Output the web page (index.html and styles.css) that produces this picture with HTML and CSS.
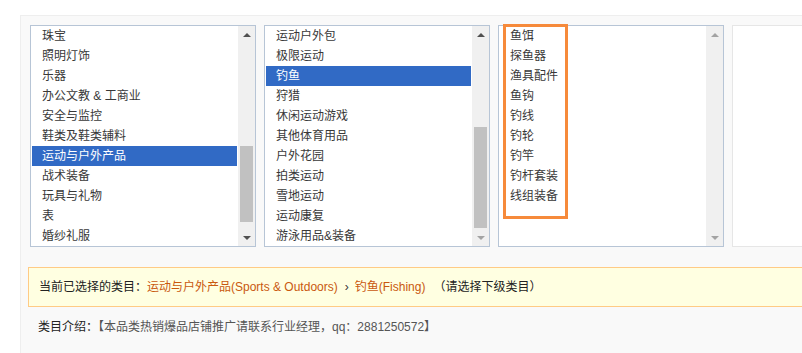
FILE: index.html
```html
<!DOCTYPE html>
<html lang="zh-CN">
<head>
    <meta charset="utf-8">
    <link rel="stylesheet" href="styles.css">
</head>
<body>
    <div class="panel">
        <div class="lists">
            <div class="catList">
                <ul class="items">
                    <li>珠宝</li>
                    <li>照明灯饰</li>
                    <li>乐器</li>
                    <li>办公文教 &amp; 工商业</li>
                    <li>安全与监控</li>
                    <li>鞋类及鞋类辅料</li>
                    <li class="selected">运动与户外产品</li>
                    <li>战术装备</li>
                    <li>玩具与礼物</li>
                    <li>表</li>
                    <li>婚纱礼服</li>
                </ul>
                <div class="scrollbar">
                    <div class="arrowBox"><span class="arrowUp"></span></div>
                    <div class="track"><div class="thumb thumbOne"></div></div>
                    <div class="arrowBox"><span class="arrowDown"></span></div>
                </div>
            </div>

            <div class="catList">
                <ul class="items">
                    <li>运动户外包</li>
                    <li>极限运动</li>
                    <li class="selected">钓鱼</li>
                    <li>狩猎</li>
                    <li>休闲运动游戏</li>
                    <li>其他体育用品</li>
                    <li>户外花园</li>
                    <li>拍类运动</li>
                    <li>雪地运动</li>
                    <li>运动康复</li>
                    <li>游泳用品&amp;装备</li>
                </ul>
                <div class="scrollbar">
                    <div class="arrowBox"><span class="arrowUp"></span></div>
                    <div class="track"><div class="thumb thumbTwo"></div></div>
                    <div class="arrowBox"><span class="arrowDown disabled"></span></div>
                </div>
            </div>

            <div class="catList">
                <div class="markBox"></div>
                <ul class="items">
                    <li>鱼饵</li>
                    <li>探鱼器</li>
                    <li>渔具配件</li>
                    <li>鱼钩</li>
                    <li>钓线</li>
                    <li>钓轮</li>
                    <li>钓竿</li>
                    <li>钓杆套装</li>
                    <li>线组装备</li>
                </ul>
                <div class="scrollbar">
                    <div class="arrowBox"><span class="arrowUp disabled"></span></div>
                    <div class="track"></div>
                    <div class="arrowBox"><span class="arrowDown disabled"></span></div>
                </div>
            </div>

            <div class="catList emptyList"></div>
        </div>

        <div class="chosen">
            当前已选择的类目：<span class="path">运动与户外产品(Sports &amp; Outdoors)</span><span class="sep">›</span><span class="path">钓鱼(Fishing)</span><span class="hint">（请选择下级类目）</span>
        </div>

        <div class="intro">
            类目介绍：<span class="introText">【本品类热销爆品店铺推广请联系行业经理，qq：2881250572】</span>
        </div>
    </div>
</body>
</html>
```

FILE: styles.css
```css
body {
    margin: 0;
    overflow: hidden;
    background-color: #ffffff;
    font-family: "Liberation Sans", "Noto Sans CJK SC", sans-serif;
    font-size: 12px;
    color: #333333;
}

.panel {
    margin: 15px 0 0 20px;
    height: calc(100vh - 15px);
    box-sizing: border-box;
    overflow: hidden;
    padding: 9px 0 0 8px;
    border-top: 1px solid #eeeeee;
    border-left: 1px solid #eeeeee;
    background-color: #f9f9f9;
}

.lists {
    display: flex;
    gap: 8px;
    padding-left: 1px;
}

.catList {
    position: relative;
    display: flex;
    flex-shrink: 0;
    width: 226px;
    height: 222px;
    box-sizing: border-box;
    border: 1px solid #b7c5d6;
    background-color: #ffffff;
}

.emptyList {
    border-color: #e6e6e6;
}

.items {
    flex: 1;
    margin: 0;
    padding: 0 1px;
    list-style: none;
}

.items li {
    height: 20px;
    line-height: 21px;
    padding-left: 10px;
    white-space: nowrap;
    color: #383838;
}

.items .selected {
    background-color: #316ac5;
    color: #ffffff;
}

.scrollbar {
    display: flex;
    flex-direction: column;
    width: 17px;
    background-color: #f0f0f0;
}

.arrowBox {
    display: flex;
    align-items: center;
    justify-content: center;
    height: 17px;
}

.arrowUp {
    width: 0;
    height: 0;
    border-left: 4px solid transparent;
    border-right: 4px solid transparent;
    border-bottom: 4px solid #505050;
}

.arrowDown {
    width: 0;
    height: 0;
    border-left: 4px solid transparent;
    border-right: 4px solid transparent;
    border-top: 4px solid #505050;
}

.arrowUp.disabled {
    border-bottom-color: #a3a3a3;
}

.arrowDown.disabled {
    border-top-color: #a3a3a3;
}

.track {
    flex: 1;
    padding: 0 2px;
}

.thumb {
    background-color: #c1c1c1;
}

.thumbOne {
    margin-top: 103px;
    height: 76px;
}

.thumbTwo {
    margin-top: 84px;
    height: 101px;
}

/* orange annotation frame over the third list */
.markBox {
    position: absolute;
    left: 4px;
    top: -2px;
    width: 65px;
    height: 195px;
    box-sizing: border-box;
    border: 3px solid #f68a3b;
}

.chosen {
    margin: 20px -10px 0 -1px;
    height: 38px;
    line-height: 38px;
    padding-left: 10px;
    border: 1px solid #ffcb85;
    background-color: #ffffe1;
    color: #222222;
    white-space: nowrap;
}

.path {
    color: #c9580f;
}

.sep {
    margin: 0 6px 0 7px;
    color: #333333;
}

.hint {
    margin-left: 8px;
}

.intro {
    margin: 10px 0 0 -1px;
    padding-left: 10px;
    line-height: 20px;
    color: #222222;
    white-space: nowrap;
}

.introText {
    color: #555555;
}
```
